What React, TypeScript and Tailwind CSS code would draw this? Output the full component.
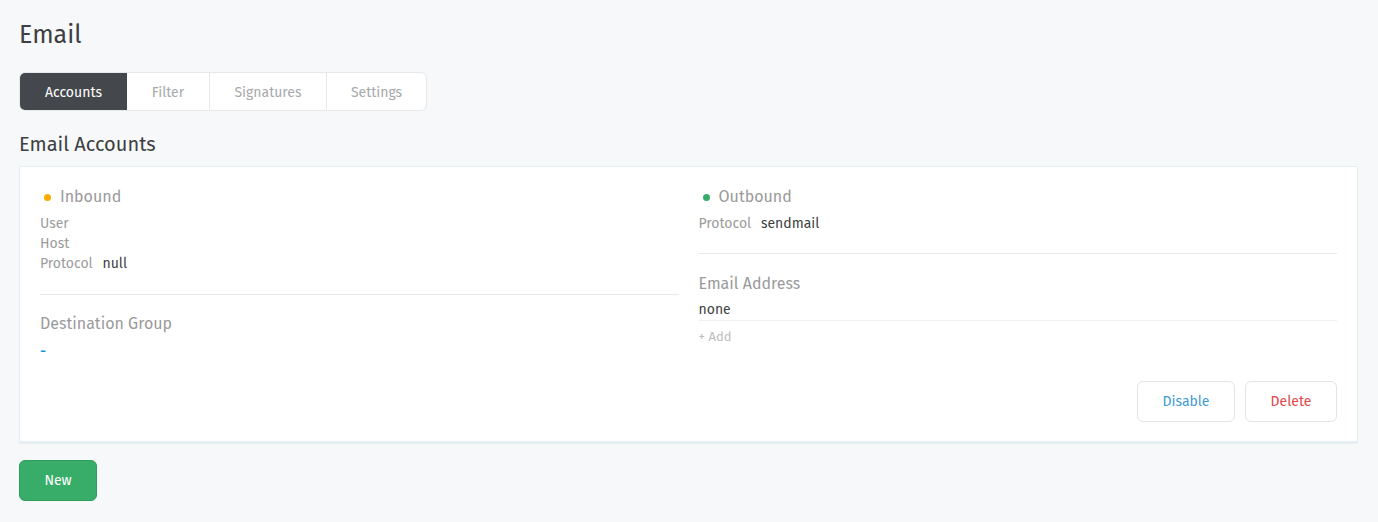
const tabs = [
  { label: "Accounts", w: "w-[107px]" },
  { label: "Filter", w: "w-[82px]" },
  { label: "Signatures", w: "w-[117px]" },
  { label: "Settings", w: "w-[100px]" },
];

const Dot = ({ color }: { color: string }) => (
  <span className={`inline-block w-[7px] h-[7px] rounded-full ${color}`} />
);

const App = () => {
  return (
    <div
      className="min-h-[522px] bg-[#f7f8fa] pl-[19px] pr-5 pt-[18px] text-[#585856]"
      style={{ fontFamily: '"Fira Sans", Lato, "Open Sans", sans-serif' }}
    >
      <h1 className="text-[25px] leading-[34px] text-[#3d3f42]">Email</h1>

      <div className="mt-[20px] inline-flex h-[39px] rounded-md border border-[#e6e8ea] bg-white overflow-hidden text-[14px]">
        {tabs.map((t, i) => (
          <div
            key={t.label}
            className={`flex items-center justify-center pt-[2px] ${t.w} ${
              i === 0
                ? "bg-[#44474b] text-white"
                : "text-[#a7a9ab]"
            } ${i > 1 ? "border-l border-[#e6e8ea]" : ""}`}
          >
            {t.label}
          </div>
        ))}
      </div>

      <h2 className="mt-[19px] text-[20px] leading-[28px] text-[#3d3f42]">Email Accounts</h2>

      <div className="mt-[8px] bg-white border border-[#e5eef3] border-b-[3px] rounded-[2px] px-5 pt-[18px] pb-[19px]">
        <div className="grid grid-cols-2 gap-5">
          <div>
            <div className="flex items-center gap-[9px] text-[16px] leading-[24px] text-[#9a9a9a] pl-[4px]">
              <Dot color="bg-[#faab00]" />
              Inbound
            </div>
            <div className="mt-[5px] text-[14px] leading-[20px] text-[#9c9c9c]">
              <div>User</div>
              <div>Host</div>
              <div>
                Protocol <span className="ml-[6px] text-[#3d3f42]">null</span>
              </div>
            </div>
            <div className="mt-[20px] border-t border-[#e8e9ea]" />
            <div className="mt-[17px] text-[16px] leading-[24px] text-[#9a9a9a]">Destination Group</div>
            <div className="mt-[5px] text-[15px] leading-[20px] font-medium text-[#1a8fe0]">-</div>
          </div>

          <div>
            <div className="flex items-center gap-[9px] text-[16px] leading-[24px] text-[#9a9a9a] pl-[4px]">
              <Dot color="bg-[#38ad69]" />
              Outbound
            </div>
            <div className="mt-[5px] text-[14px] leading-[20px] text-[#9c9c9c]">
              Protocol <span className="ml-[6px] text-[#3d3f42]">sendmail</span>
            </div>
            <div className="mt-[19px] border-t border-[#e8e9ea]" />
            <div className="mt-[18px] text-[16px] leading-[24px] text-[#9a9a9a]">Email Address</div>
            <div className="mt-[4px] text-[14px] leading-[20px] text-[#3d3f42] border-b border-[#eeeff0]">
              none
            </div>
            <div className="mt-[6px] text-[13px] leading-[20px] text-[#bdbdbd]">+ Add</div>
            <div className="mt-[34px] flex justify-end gap-[10px]">
              <button className="h-[41px] w-[98px] rounded-md border border-[#e2e4e6] bg-white text-[14px] text-[#3e9bd5]">
                Disable
              </button>
              <button className="h-[41px] w-[92px] rounded-md border border-[#e2e4e6] bg-white text-[14px] text-[#e0484a]">
                Delete
              </button>
            </div>
          </div>
        </div>
      </div>

      <button className="mt-[16px] h-[41px] w-[78px] rounded-md bg-[#38ad69] border border-[#2f9e5c] text-[14px] text-white">
        New
      </button>
    </div>
  );
};

export default App;
